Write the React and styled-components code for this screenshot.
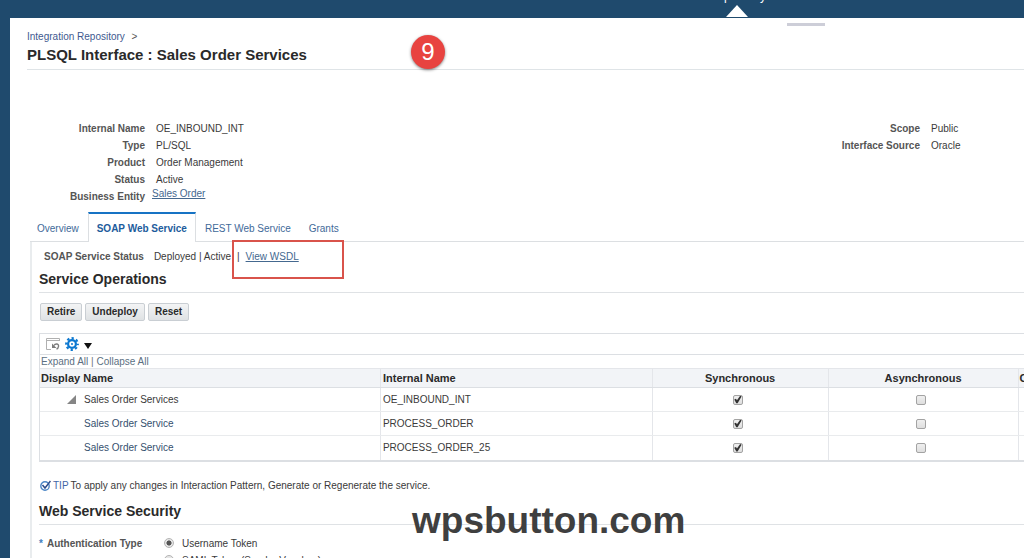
import {useState} from 'react';
import {createGlobalStyle, styled} from 'styled-components';

const GlobalStyle = createGlobalStyle`
  * {
    box-sizing: border-box;
  }

  body {
    margin: 0;
    background: #1f4a6d;
    color: #3a3a3a;
    font-family: 'Liberation Sans', Arial, sans-serif;
    font-size: 10px;
    line-height: 17px;
  }
`;

const Page = styled.div`
  position: relative;
  height: 100vh;
  overflow: hidden;
`;

const TopBar = styled.header`
  display: flex;
  justify-content: flex-end;
  align-items: flex-end;
  height: 18px;
  padding-right: 258px;
  background: #1f4a6d;
`;

const NavItem = styled.a`
  display: flex;
  flex-direction: column;
  align-items: center;
  gap: 2px;
  color: white;
  font-size: 12px;
  line-height: 14px;
  text-decoration: none;
`;

const Pointer = styled.svg`
  display: block;
  width: 22px;
  height: 13px;
`;

const Panel = styled.main`
  margin-left: 10px;
  min-height: 100vh;
  background: white;
`;

const Handle = styled.div`
  display: flex;
  justify-content: flex-end;
  height: 10px;
  padding: 5px 199px 2px 0;

  &::before {
    content: '';
    width: 38px;
    background: #cdced8;
  }
`;

const Heading = styled.div`
  margin-left: 17px;
  border-bottom: 1px solid #dfe4e7;
  height: 42px;
`;

const Crumb = styled.nav`
  line-height: 18px;
  color: #555;

  a {
    color: #41598f;
    text-decoration: none;
    margin-right: 4px;
  }
`;

const H1 = styled.h1`
  margin: 0;
  font-size: 15px;
  line-height: 18px;
  color: #2a2a2a;
`;

const Details = styled.div`
  display: flex;
  justify-content: space-between;
  padding: 50px 0 7px;
`;

const Fields = styled.dl`
  display: grid;
  grid-template-columns: ${(props) => props.$label} ${(props) => props.$value};
  column-gap: 11px;
  align-content: start;
  margin: 0;

  dt {
    text-align: right;
    font-weight: bold;
    color: #555;
  }

  dd {
    margin: 0;
  }
`;

const TextLink = styled.a`
  color: #44688f;
  text-decoration: underline;
`;

const RaisedLink = styled(TextLink)`
  display: block;
  margin: -3px 0 0 -4px;
`;

const Tabs = styled.div`
  display: flex;
  margin-left: 20px;
  padding-right: 8px;
  height: 30px;
  border-bottom: 1px solid #dcdfe2;
`;

const Tab = styled.button`
  height: 30px;
  padding: 0 8px;
  border: 1px solid transparent;
  border-width: 2px 1px 0;
  border-color: ${(props) => (props.$active ? '#1673c4 #dcdfe2' : 'transparent')};
  background: ${(props) => (props.$active ? 'white' : 'transparent')};
  color: ${(props) => (props.$active ? '#1d5c9c' : '#3f6a99')};
  font: inherit;
  font-weight: ${(props) => (props.$active ? 'bold' : 'normal')};

  &:first-child {
    padding-left: 6px;
  }
`;

const TabBody = styled.section`
  margin-left: 20px;
  padding: 6px 0 0 7px;
  border-left: 2px solid #e9ecee;
`;

const Status = styled.div`
  display: flex;
  gap: 6px;
  padding-left: 5px;

  b {
    margin-right: 4px;
    color: #555;
  }
`;

const LinkSpot = styled.span`
  position: relative;
`;

const RedBox = styled.span`
  position: absolute;
  top: -8px;
  left: -14px;
  width: 112px;
  height: 39px;
  border: 2px solid #d9534b;
  pointer-events: none;
`;

const H2 = styled.h2`
  margin: 0;
  height: 28px;
  border-bottom: 1px solid #dfe2e5;
  color: #2a2a2a;
  font-size: 14px;
  line-height: 28px;
`;

const Buttons = styled.div`
  display: flex;
  gap: 3px;
  padding: 10px 0 12px 1px;
`;

const Button = styled.button`
  height: 18px;
  padding: 0 6px;
  border: 1px solid #c9ced3;
  border-radius: 2px;
  background: linear-gradient(#f3f4f5, #dfe2e4);
  color: #2a2a2a;
  font: inherit;
  font-weight: bold;
  line-height: 16px;
`;

const TableBox = styled.div`
  border: 1px solid #dcdfe3;
  border-width: 1px 0 2px 1px;
`;

const Toolbar = styled.div`
  display: flex;
  align-items: center;
  gap: 5px;
  height: 21px;
  padding-left: 6px;
  border-bottom: 1px solid #dcdfe3;
`;

const IconButton = styled.button`
  display: flex;
  padding: 0;
  border: 0;
  background: none;
`;

const Expand = styled.div`
  height: 13px;
  padding-left: 1px;
  line-height: 13px;
  color: #68727c;

  a {
    color: #5c6f82;
    text-decoration: none;
  }
`;

const Table = styled.table`
  width: 100%;
  table-layout: fixed;
  border-collapse: collapse;

  th,
  td {
    padding: 0 2px;
    border-right: 1px solid #e4e6ea;
    overflow: hidden;
    white-space: nowrap;
    text-align: left;
  }

  th:first-child,
  td:first-child {
    padding-left: 1px;
  }

  th:last-child,
  td:last-child {
    border-right: 0;
    padding: 0 0 0 1px;
  }

  th {
    height: 19px;
    border-top: 1px solid #e4e6ea;
    border-bottom: 1px solid #dcdfe3;
    background: #f2f4f7;
    color: #2a2a2a;
    font-size: 11px;
    line-height: 16px;
  }

  td {
    height: 24px;
    border-bottom: 1px solid #e9ebed;
  }

  tbody tr:last-child td {
    border-bottom: 0;
  }
`;

const Th = styled.th`
  && {
    text-align: ${(props) => (props.$center ? 'center' : 'left')};
  }
`;

const Toggle = styled.div`
  display: flex;
  justify-content: flex-end;
  width: 35px;
`;

const NameRow = styled.div`
  display: flex;
  align-items: center;
  gap: 8px;

  a {
    color: #35506e;
    text-decoration: none;
  }
`;

const CheckCell = styled.td`
  && {
    padding-right: 7px;
  }
`;

const Checkbox = styled.input`
  appearance: none;
  display: block;
  width: 10px;
  height: 10px;
  margin: 0 auto;
  border: 1px solid #a3a3a3;
  border-radius: 2px;
  background: linear-gradient(#efefef, #dedede);

  &:checked::before {
    content: '';
    display: block;
    width: 8px;
    height: 8px;
    background: #333;
    clip-path: polygon(8% 50%, 30% 42%, 42% 60%, 82% 2%, 100% 14%, 50% 96%, 34% 96%);
  }
`;

const Tip = styled.p`
  display: flex;
  align-items: center;
  gap: 2px;
  margin: 15px 0 3px 1px;

  b {
    color: #3f66a8;
    font-weight: normal;
  }
`;

const Auth = styled.fieldset`
  display: grid;
  grid-template-columns: 105px 1fr;
  column-gap: 20px;
  margin: 0;
  padding: 10px 0 0;
  border: 0;
`;

const AuthTitle = styled.span`
  color: #555;
  font-weight: bold;

  i {
    color: #3f7fc0;
    font-style: normal;
    margin-right: 4px;
  }
`;

const RadioLabel = styled.label`
  display: flex;
  align-items: center;
  gap: 8px;
`;

const Radio = styled.input`
  appearance: none;
  width: 10px;
  height: 10px;
  margin: 0;
  border: 1px solid #b4b4b4;
  border-radius: 50%;
  background: ${(props) => (props.checked ? 'radial-gradient(#555 40%, #e6e6e6 50%)' : '#e6e6e6')};
`;

const Step = styled.div`
  position: absolute;
  top: 35px;
  left: 411px;
  width: 34px;
  height: 34px;
  border-radius: 50%;
  background: #e84340;
  box-shadow: 0 1px 3px rgba(0, 0, 0, 0.5);
  color: white;
  font-size: 24px;
  line-height: 34px;
  text-align: center;
`;

const Watermark = styled.div`
  position: absolute;
  top: 500px;
  left: 412px;
  color: #3f3f3f;
  font-size: 37px;
  font-weight: bold;
  line-height: 42px;
`;

const rows = [
  {name: 'Sales Order Services', internal: 'OE_INBOUND_INT', parent: true},
  {name: 'Sales Order Service', internal: 'PROCESS_ORDER'},
  {name: 'Sales Order Service', internal: 'PROCESS_ORDER_25'},
];

const tabs = ['Overview', 'SOAP Web Service', 'REST Web Service', 'Grants'];

const DetachIcon = () => (
  <svg width="14" height="13" viewBox="0 0 14 13" fill="none" stroke="#b0b0b0">
    <path d="M5 11.5H0.5V0.5H13.5V3" />
    <path d="M0 2.5H14" />
    <path d="M8 7.5C9 5.5 13 5 12.5 8.5C12.3 10 11.5 10.8 10.5 11.2" stroke="#7c7c7c" strokeWidth="1.4" />
    <path d="M6 5.5V10H10.5Z" fill="#7c7c7c" stroke="none" />
  </svg>
);

const GearIcon = () => (
  <svg width="14" height="14" viewBox="0 0 14 14" fill="none" stroke="#0c78d0">
    <circle cx="7" cy="7" r="5.8" strokeWidth="2.2" strokeDasharray="2.28 2.275" strokeDashoffset="1.14" />
    <circle cx="7" cy="7" r="3.9" strokeWidth="2.2" />
    <circle cx="7" cy="7" r="1" fill="#0c78d0" stroke="none" />
  </svg>
);

const TipIcon = () => (
  <svg width="11" height="11" viewBox="0 0 11 11" fill="none">
    <circle cx="5" cy="6" r="4.2" stroke="#4b86c6" strokeWidth="1.4" />
    <path d="M2.5 5L5 8L10.5 1" stroke="#2d4d8a" strokeWidth="1.5" />
  </svg>
);

const App = () => {
  const [activeTab, setActiveTab] = useState('SOAP Web Service');
  const [authType, setAuthType] = useState('username');

  return (
    <Page>
      <GlobalStyle />
      <TopBar>
        <NavItem href="#repository">
          Repository
          <Pointer viewBox="0 0 22 13">
            <path d="M0 12L11 0L22 12Z" fill="white" />
          </Pointer>
        </NavItem>
      </TopBar>

      <Panel>
        <Handle />
        <Heading>
          <Crumb>
            <a href="#integration">Integration Repository</a> &gt;
          </Crumb>
          <H1>PLSQL Interface : Sales Order Services</H1>
        </Heading>

        <Details>
          <Fields $label="135px" $value="auto">
            <dt>Internal Name</dt>
            <dd>OE_INBOUND_INT</dd>
            <dt>Type</dt>
            <dd>PL/SQL</dd>
            <dt>Product</dt>
            <dd>Order Management</dd>
            <dt>Status</dt>
            <dd>Active</dd>
            <dt>Business Entity</dt>
            <dd>
              <RaisedLink href="#sales-order">Sales Order</RaisedLink>
            </dd>
          </Fields>
          <Fields $label="auto" $value="93px">
            <dt>Scope</dt>
            <dd>Public</dd>
            <dt>Interface Source</dt>
            <dd>Oracle</dd>
          </Fields>
        </Details>

        <Tabs role="tablist">
          {tabs.map((tab) => (
            <Tab
              key={tab}
              role="tab"
              aria-selected={tab === activeTab}
              $active={tab === activeTab}
              onClick={() => setActiveTab(tab)}>
              {tab}
            </Tab>
          ))}
        </Tabs>

        <TabBody>
          <Status>
            <b>SOAP Service Status</b>
            <span>Deployed | Active</span>
            <span>|</span>
            <LinkSpot>
              <TextLink href="#wsdl">View WSDL</TextLink>
              <RedBox />
            </LinkSpot>
          </Status>

          <H2>Service Operations</H2>
          <Buttons>
            <Button>Retire</Button>
            <Button>Undeploy</Button>
            <Button>Reset</Button>
          </Buttons>

          <TableBox>
            <Toolbar>
              <IconButton aria-label="Detach">
                <DetachIcon />
              </IconButton>
              <IconButton aria-label="Settings">
                <GearIcon />
              </IconButton>
              <IconButton aria-label="More">
                <svg width="8" height="10" viewBox="0 0 8 10">
                  <path d="M0 4H8L4 10Z" fill="#111" />
                </svg>
              </IconButton>
            </Toolbar>
            <Expand>
              <a href="#expand">Expand All</a> | <a href="#collapse">Collapse All</a>
            </Expand>
            <Table>
              <colgroup>
                <col style={{width: '34.6%'}} />
                <col style={{width: '27.6%'}} />
                <col style={{width: '17.9%'}} />
                <col style={{width: '19.3%'}} />
                <col />
              </colgroup>
              <thead>
                <tr>
                  <Th>Display Name</Th>
                  <Th>Internal Name</Th>
                  <Th $center>Synchronous</Th>
                  <Th $center>Asynchronous</Th>
                  <Th>C</Th>
                </tr>
              </thead>
              <tbody>
                {rows.map((row) => (
                  <tr key={row.internal}>
                    <td>
                      <NameRow>
                        <Toggle>
                          {row.parent && (
                            <svg width="9" height="9" viewBox="0 0 9 9">
                              <path d="M9 0V9H0Z" fill="#858585" />
                            </svg>
                          )}
                        </Toggle>
                        {row.parent ? row.name : <a href={'#' + row.internal}>{row.name}</a>}
                      </NameRow>
                    </td>
                    <td>{row.internal}</td>
                    <CheckCell>
                      <Checkbox type="checkbox" aria-label={row.internal + ' synchronous'} defaultChecked />
                    </CheckCell>
                    <CheckCell>
                      <Checkbox type="checkbox" aria-label={row.internal + ' asynchronous'} />
                    </CheckCell>
                    <td />
                  </tr>
                ))}
              </tbody>
            </Table>
          </TableBox>

          <Tip>
            <TipIcon />
            <b>TIP</b>
            <span>To apply any changes in Interaction Pattern, Generate or Regenerate the service.</span>
          </Tip>

          <H2>Web Service Security</H2>
          <Auth>
            <AuthTitle>
              <i>*</i>Authentication Type
            </AuthTitle>
            <div>
              <RadioLabel>
                <Radio
                  type="radio"
                  name="authType"
                  checked={authType === 'username'}
                  onChange={() => setAuthType('username')}
                />
                Username Token
              </RadioLabel>
              <RadioLabel>
                <Radio
                  type="radio"
                  name="authType"
                  checked={authType === 'saml'}
                  onChange={() => setAuthType('saml')}
                />
                SAML Token (Sender Vouches)
              </RadioLabel>
            </div>
          </Auth>
        </TabBody>
      </Panel>

      <Step>9</Step>
      <Watermark>wpsbutton.com</Watermark>
    </Page>
  );
};

export default App;
